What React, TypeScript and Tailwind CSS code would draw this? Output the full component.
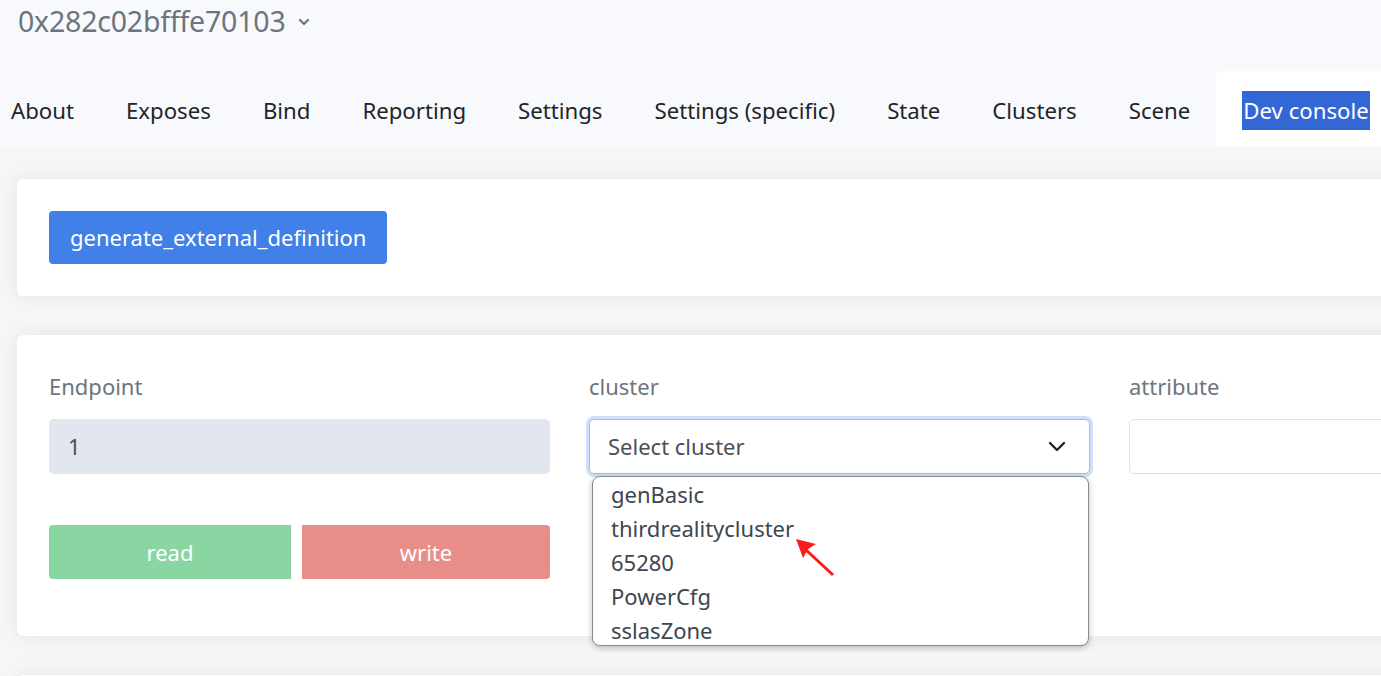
import React from "react";

const tabs = ["About", "Exposes", "Bind", "Reporting", "Settings", "Settings (specific)", "State", "Clusters", "Scene"];
const options = ["genBasic", "thirdrealitycluster", "65280", "PowerCfg", "sslasZone"];

export default function App() {
  return (
    <div
      className="w-[1381px] h-[676px] overflow-hidden bg-[#f6f6f7] relative"
      style={{ fontFamily: '"Noto Sans", "Open Sans", sans-serif' }}
    >
      {/* header */}
      <div className="bg-[#f8f9fc] h-[147px] flex flex-col">
        <div className="h-[71px] pl-[18px] flex items-start pt-[1px]">
          <span className="text-[28.5px] leading-[40px] text-[#6c757d] tracking-[-0.2px]">0x282c02bfffe70103</span>
          <svg className="ml-[12px] mt-[16px]" width="12" height="10" viewBox="0 0 12 10">
            <path d="M2 3 L6 7 L10 3" fill="none" stroke="#6c757d" strokeWidth="2.2" strokeLinecap="round" strokeLinejoin="round" />
          </svg>
        </div>
        <div className="flex h-[76px] items-stretch pl-[11px] whitespace-nowrap">
          {tabs.map((t, i) => (
            <div key={t} className={`flex items-center pt-[3px] text-[22.2px] text-[#212529] ${i === 0 ? "pr-[26px]" : "px-[26px]"}`}>
              {t}
            </div>
          ))}
          <div className="flex items-center pt-[2px] bg-white rounded-t-[6px] pl-[26px] pr-[30px] text-[22.2px]">
            <span className="bg-[#3367d6] text-white leading-[39px] px-[1px]">Dev console</span>
          </div>
        </div>
      </div>

      {/* content */}
      <div className="pl-[17px] pt-[32px] flex flex-col gap-[39px]">
        <div className="bg-white rounded-[6px] shadow-[0_0_18px_rgba(0,0,0,0.08)] h-[117px] p-[32px] w-[1700px] shrink-0">
          <button className="bg-[#4080e8] text-white text-[22px] rounded-[4px] h-[53px] px-[21px] leading-[53px] flex items-center">
            generate_external_definition
          </button>
        </div>

        <div className="bg-white rounded-[6px] shadow-[0_0_18px_rgba(0,0,0,0.08)] h-[301px] pt-[36px] pl-[32px] w-[1700px] shrink-0 relative">
          <div className="flex gap-[39px]">
            <div className="w-[501px] shrink-0 flex flex-col">
              <div className="text-[22px] text-[#6c757d] leading-[30px] h-[48px]">Endpoint</div>
              <div className="h-[55px] bg-[#e2e6ee] rounded-[5px] flex items-center pl-[19px] text-[22px] text-[#495057]">1</div>
              <div className="flex mt-[51px] gap-[11px]">
                <div className="w-[242px] h-[54px] bg-[#8ad6a3] rounded-l-[4px] flex items-center justify-center text-white text-[22px]">read</div>
                <div className="w-[248px] h-[54px] bg-[#e78e8b] rounded-r-[4px] flex items-center justify-center text-white text-[22px]">write</div>
              </div>
            </div>
            <div className="w-[501px] shrink-0 flex flex-col relative">
              <div className="text-[22px] text-[#6c757d] leading-[30px] h-[48px]">cluster</div>
              <div className="h-[55px] border border-[#9dbdf2] ring-[3px] ring-[#cfdefa] rounded-[5px] flex items-center justify-between pl-[18px] pr-[22px] text-[22px] text-[#495057] bg-white">
                <span>Select cluster</span>
                <svg width="20" height="14" viewBox="0 0 20 14">
                  <path d="M3 3 L10 10 L17 3" fill="none" stroke="#212529" strokeWidth="2.4" strokeLinecap="round" strokeLinejoin="round" />
                </svg>
              </div>
              {/* dropdown */}
              <div className="absolute left-[3px] top-[105px] w-[497px] h-[170px] bg-white border border-[#8a8a8a] rounded-[8px] shadow-[0_2px_6px_rgba(0,0,0,0.25)] overflow-hidden pl-[18px] z-10">
                {options.map((o) => (
                  <div key={o} className="text-[22px] leading-[34px] text-[#3c4650]">{o}</div>
                ))}
              </div>
              {/* red arrow */}
              <svg className="absolute left-[200px] top-[162px] z-20" width="46" height="46" viewBox="0 0 46 46">
                <path d="M44 42 L16 16" stroke="#ff1a1a" strokeWidth="3" fill="none" />
                <polygon points="7,6 27,11 19,16 14,25" fill="#ff1a1a" />
              </svg>
            </div>
            <div className="w-[501px] shrink-0 flex flex-col">
              <div className="text-[22px] text-[#6c757d] leading-[30px] h-[48px]">attribute</div>
              <div className="h-[55px] border border-[#dee2e6] rounded-[5px] bg-white"></div>
            </div>
          </div>
        </div>

        <div className="bg-white rounded-[6px] shadow-[0_0_18px_rgba(0,0,0,0.08)] h-[200px] w-[1700px] shrink-0"></div>
      </div>
    </div>
  );
}
